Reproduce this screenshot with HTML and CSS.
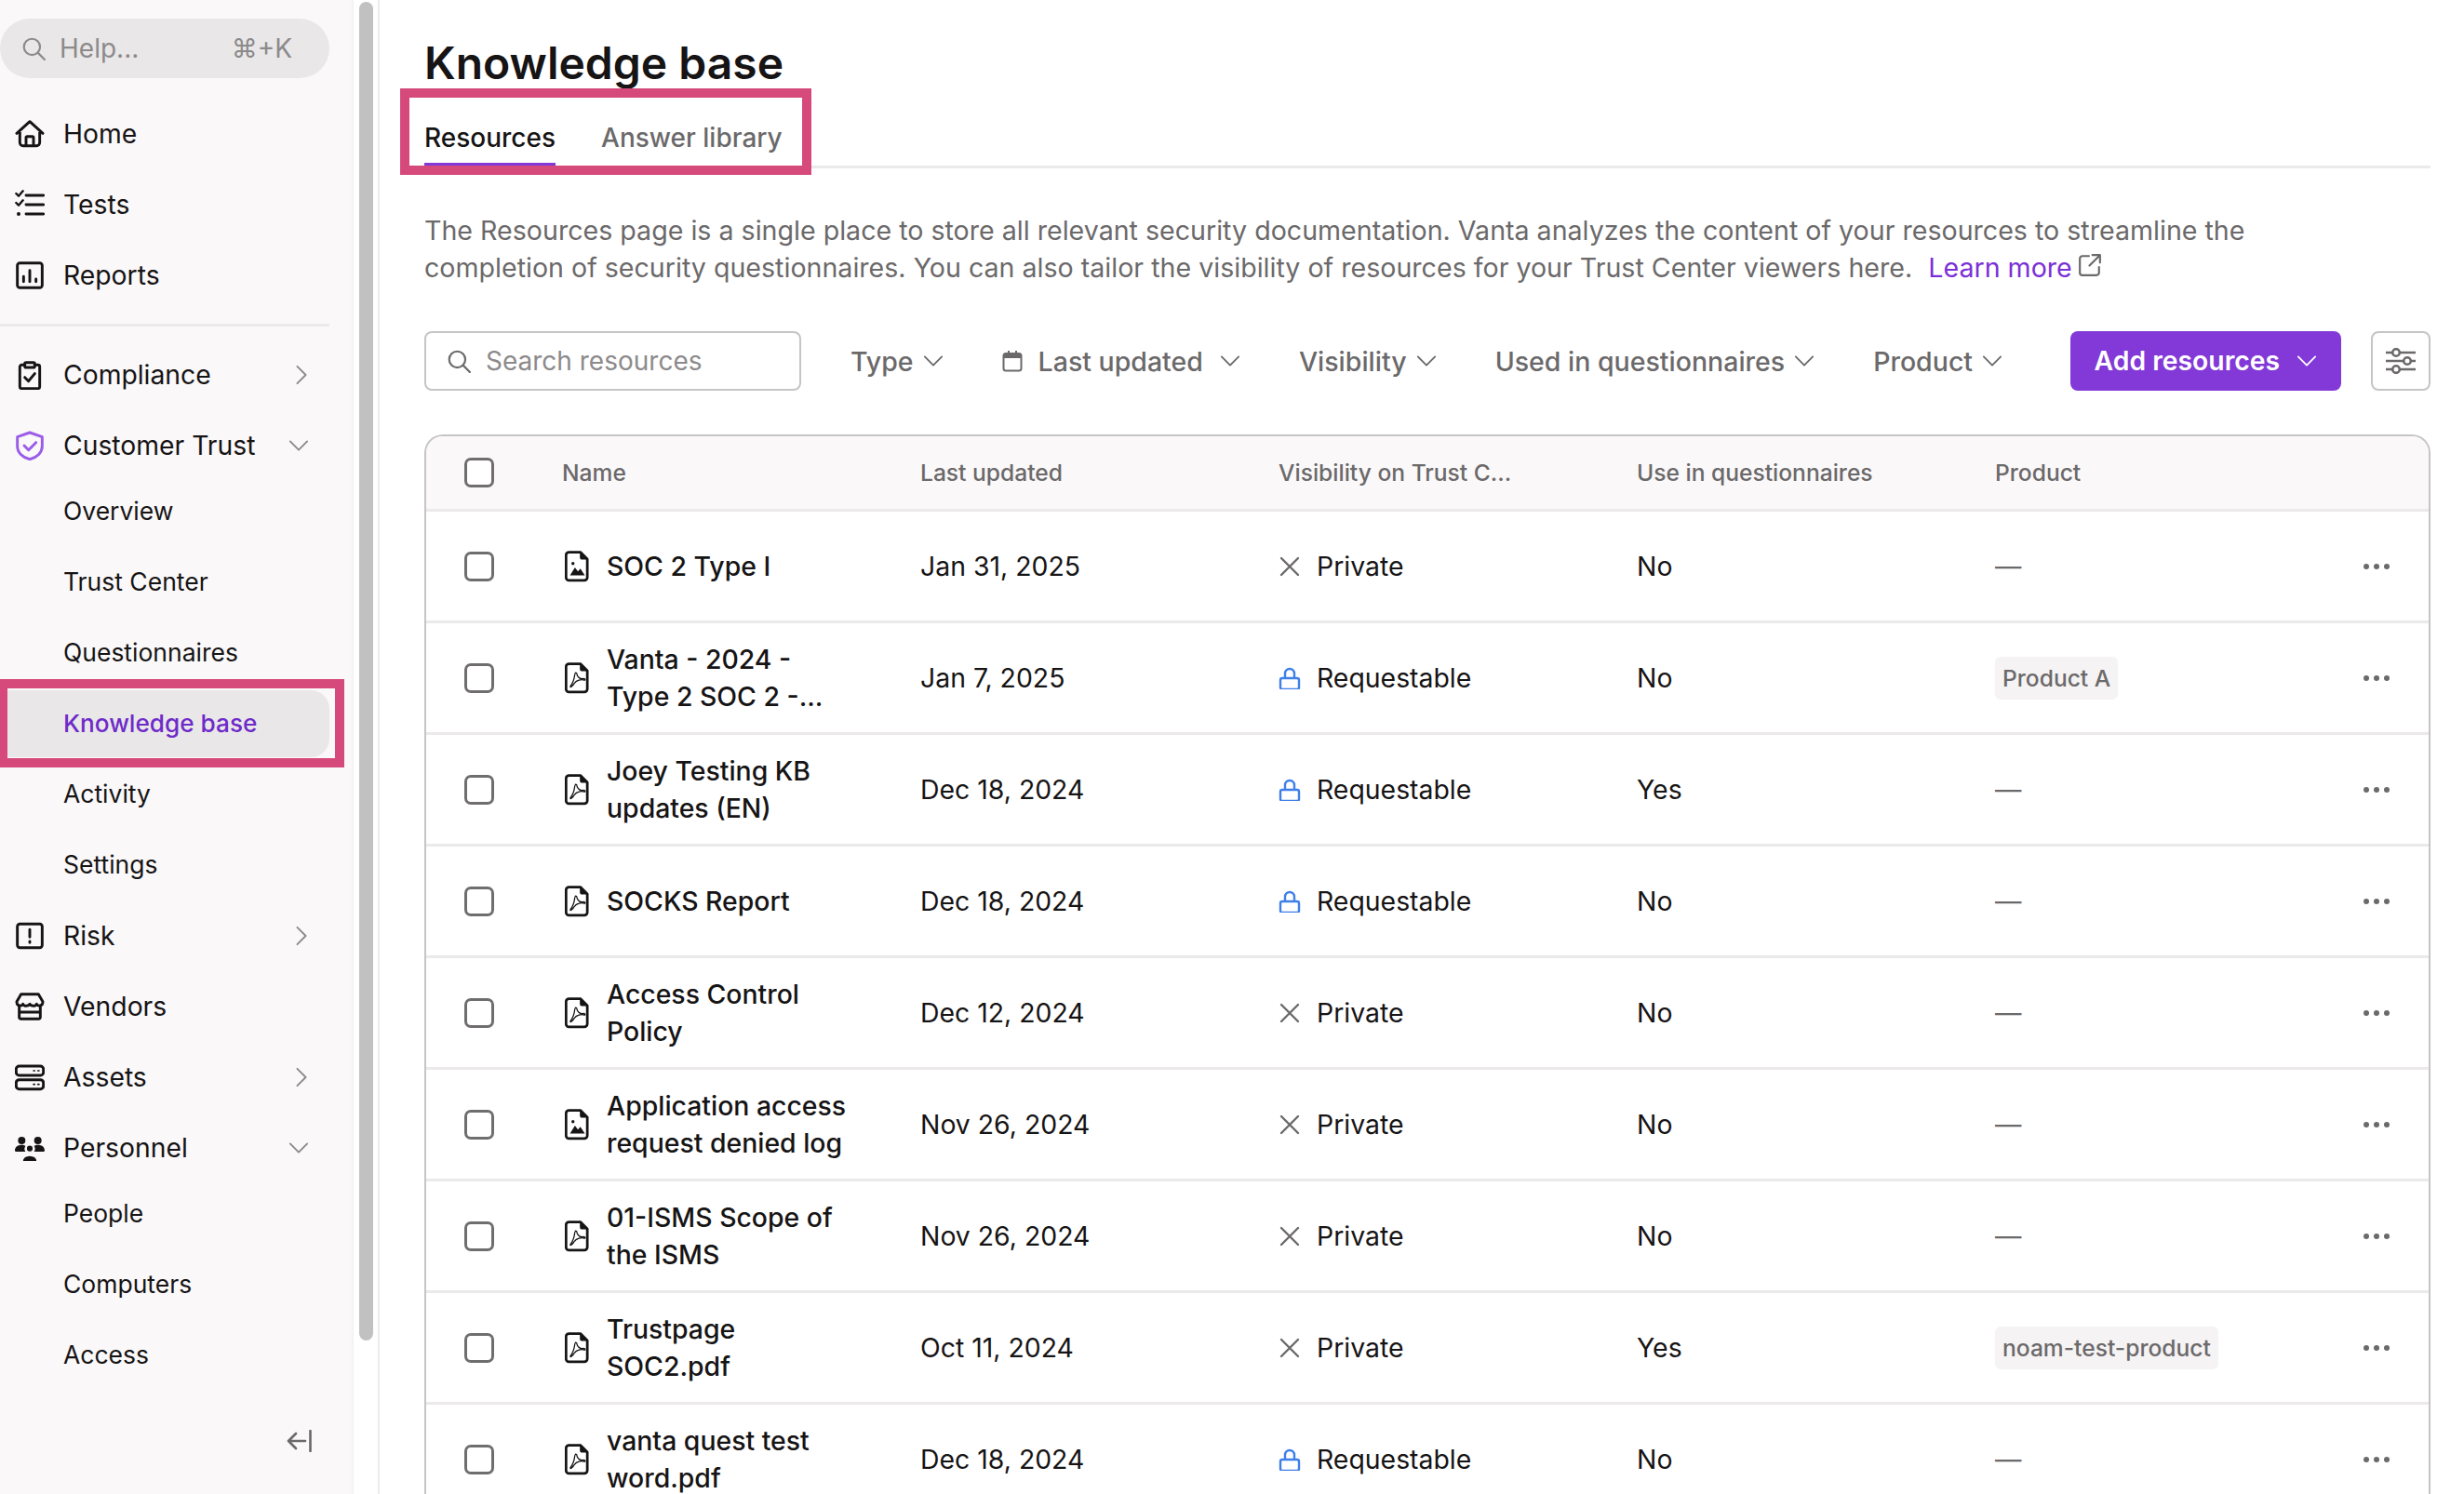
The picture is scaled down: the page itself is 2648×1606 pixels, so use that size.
FILE: index.html
```html
<!DOCTYPE html>
<html>
  <head>
    <meta charset="utf-8" />
    <title>Knowledge base</title>
    <link rel="stylesheet" href="styles.css">
  </head>
  <body>
    <svg class="defs" width="0" height="0">
      <symbol id="chev-down" viewBox="0 0 24 24"><path d="M2 7l10 10L22 7" /></symbol>
      <symbol id="chev-right" viewBox="0 0 24 24"><path d="M7 2l10 10L7 22" /></symbol>
      <symbol id="search" viewBox="0 0 24 24"><circle cx="10.500" cy="10.500" r="8" /><path d="M16.500 16.500L23 23" /></symbol>
      <symbol id="file-image" viewBox="0 0 24 32">
        <path d="M4 1.500h11.500l7 7V27a3 3 0 0 1-3 3H4a3 3 0 0 1-3-3V4.500a3 3 0 0 1 3-3z" />
        <path class="solid" d="M15 1.500l7.500 7.500h-5a2.500 2.500 0 0 1-2.500-2.500zM5 25l5-8 3 4 2.500-3 4.500 7z" />
        <circle class="solid" cx="8" cy="13" r="1.600" />
      </symbol>
      <symbol id="file-pdf" viewBox="0 0 24 32">
        <path d="M4 1.500h11.500l7 7V27a3 3 0 0 1-3 3H4a3 3 0 0 1-3-3V4.500a3 3 0 0 1 3-3z" />
        <path class="solid" d="M15 1.500l7.500 7.500h-5a2.500 2.500 0 0 1-2.500-2.500z" />
        <path class="thin" d="M10.500 11c-1.500 0 .5 6-5 13-1 2 2 1 4-3 2-3 7-4 10-3 1.500 0 1-2-2-1.500-3 .5-5.500-3-5.500-4.500 0-1 0-1.500-1.500-1.500z" />
      </symbol>
      <symbol id="private" viewBox="0 0 24 24"><path d="M3 3l18 18M21 3L3 21" /></symbol>
      <symbol id="lock" viewBox="0 0 24 24"><path d="M2 14a2 2 0 0 1 2-2h16a2 2 0 0 1 2 2v8a2 2 0 0 1-2 2H4a2 2 0 0 1-2-2zM7 12V7a5 5 0 0 1 10 0v5" /></symbol>
    </svg>

    <div class="app">
      <aside class="sidebar">
        <div class="help">
          <svg class="help-icon"><use href="#search" /></svg>
          <span class="help-text">Help...</span>
          <span class="help-keys">⌘+K</span>
        </div>

        <nav class="nav">
          <a class="nav-item">
            <svg class="nav-icon" viewBox="0 0 24 24"><path d="M1.500 11.500L12 2l10.500 9.500M4 9.500V19a2.500 2.500 0 0 0 2.500 2.500h11A2.500 2.500 0 0 0 20 19V9.500M9 21.500V15a1 1 0 0 1 1-1h4a1 1 0 0 1 1 1v6.500" /></svg>
            Home
          </a>
          <a class="nav-item">
            <svg class="nav-icon" viewBox="0 0 24 24"><path d="M9 4.500h14M9 12h14M9 19.500h14" /><path class="tick" d="M1 3l2 2 3.500-4M1 10.500l2 2 3.500-4" /><circle class="solid" cx="3" cy="19.500" r="1.500" /></svg>
            Tests
          </a>
          <a class="nav-item">
            <svg class="nav-icon" viewBox="0 0 24 24"><rect x="2" y="2" width="20" height="20" rx="2" /><path d="M7 13v4M12 8v9M17 15v2" /></svg>
            Reports
          </a>
        </nav>

        <div class="nav-divider"></div>

        <nav class="nav">
          <a class="nav-item">
            <svg class="nav-icon" viewBox="0 0 24 24"><path d="M8 4H5.500a1.500 1.500 0 0 0-1.500 1.500v16A1.500 1.500 0 0 0 5.500 23h13a1.500 1.500 0 0 0 1.500-1.500v-16A1.500 1.500 0 0 0 18.500 4H16" /><rect x="8" y="2" width="8" height="4" rx="1" /><path d="M8 14l3 3 5-6" /></svg>
            Compliance
            <svg class="nav-chev right"><use href="#chev-right" /></svg>
          </a>
          <a class="nav-item">
            <svg class="nav-icon purple" viewBox="0 0 24 24"><path d="M12 1.500l10 3.500v7.500c0 5-4 9-10 10.500C6 21.500 2 17.500 2 12.500V5z" /><path d="M7.500 12l3.500 3.500 6-6" /></svg>
            Customer Trust
            <svg class="nav-chev"><use href="#chev-down" /></svg>
          </a>
          <div class="subnav">
            <a class="nav-item sub">Overview</a>
            <a class="nav-item sub">Trust Center</a>
            <a class="nav-item sub">Questionnaires</a>
            <a class="nav-item sub active">Knowledge base</a>
            <a class="nav-item sub">Activity</a>
            <a class="nav-item sub">Settings</a>
          </div>
          <a class="nav-item">
            <svg class="nav-icon" viewBox="0 0 24 24"><rect x="2" y="2.500" width="20" height="19" rx="2" /><path d="M12 7v6M12 16.500v1" /></svg>
            Risk
            <svg class="nav-chev right"><use href="#chev-right" /></svg>
          </a>
          <a class="nav-item">
            <svg class="nav-icon" viewBox="0 0 24 24"><path d="M5 2h14l3.500 6c0 4-4 4-5 2-1 2-4 2-5.500 0-1.500 2-4.500 2-5.500 0-1 2-5 2-5-2zM3.500 11v9.500A1.500 1.500 0 0 0 5 22h14a1.500 1.500 0 0 0 1.500-1.500V11M3.500 16.500h17" /></svg>
            Vendors
          </a>
          <a class="nav-item">
            <svg class="nav-icon" viewBox="0 0 24 24"><rect x="1" y="3" width="22" height="7.500" rx="2.500" /><rect x="1" y="14" width="22" height="7.500" rx="2.500" /><path class="thin" d="M15 6.750h1M18.500 6.750h1M15 17.750h1M18.500 17.750h1" /></svg>
            Assets
            <svg class="nav-chev right"><use href="#chev-right" /></svg>
          </a>
          <a class="nav-item">
            <svg class="nav-icon" viewBox="0 0 24 24"><circle class="solid" cx="5.500" cy="6" r="3" /><circle class="solid" cx="18.500" cy="6" r="3" /><path class="solid" d="M0 14c0-3 2.500-4.500 5.500-4.500 1.500 0 2.500.5 3 1-1 1.500-1 3 0 4.500H1a1 1 0 0 1-1-1zM24 14c0-3-2.500-4.500-5.500-4.500-1.500 0-2.500.5-3 1 1 1.500 1 3 0 4.500H23a1 1 0 0 0 1-1z" /><circle class="mid" cx="12" cy="12.500" r="2.800" /><path class="mid" d="M6 23c0-3 2.500-5 6-5s6 2 6 5z" /></svg>
            Personnel
            <svg class="nav-chev"><use href="#chev-down" /></svg>
          </a>
          <div class="subnav">
            <a class="nav-item sub">People</a>
            <a class="nav-item sub">Computers</a>
            <a class="nav-item sub">Access</a>
          </div>
        </nav>

        <svg class="collapse" viewBox="0 0 28 24"><path d="M25.500 1v22M20 12H2M10 4l-8 8 8 8" /></svg>
      </aside>

      <div class="scrollbar"><div class="scrollbar-thumb"></div></div>

      <main class="main">
        <h1 class="title">Knowledge base</h1>

        <div class="tabs">
          <a class="tab active">Resources</a>
          <a class="tab">Answer library</a>
        </div>

        <p class="intro">
          The Resources page is a single place to store all relevant security documentation. Vanta analyzes the content of your resources to streamline the<br>
          completion of security questionnaires. You can also tailor the visibility of resources for your Trust Center viewers here.
          <a class="link">Learn more<svg class="link-icon" viewBox="0 0 24 24"><path d="M11 3H4.500A2.500 2.500 0 0 0 2 5.500v14A2.500 2.500 0 0 0 4.500 22h14a2.500 2.500 0 0 0 2.500-2.500V14M14.500 2H22v7.500M22 2L11.500 12.500" /></svg></a>
        </p>

        <div class="filters">
          <div class="search">
            <svg class="search-icon"><use href="#search" /></svg>
            <span>Search resources</span>
          </div>
          <div class="filter">Type<svg class="chev"><use href="#chev-down" /></svg></div>
          <div class="filter">
            <svg class="cal" viewBox="0 0 22 24"><rect x="1.500" y="4" width="19" height="18.500" rx="2.500" /><path class="solid" d="M2 4h18v5H2zM6 1h2v4H6zM14 1h2v4h-2z" /></svg>
            Last updated<svg class="chev wide"><use href="#chev-down" /></svg>
          </div>
          <div class="filter">Visibility<svg class="chev"><use href="#chev-down" /></svg></div>
          <div class="filter">Used in questionnaires<svg class="chev"><use href="#chev-down" /></svg></div>
          <div class="filter">Product<svg class="chev"><use href="#chev-down" /></svg></div>
          <button class="add-btn">Add resources<svg class="chev"><use href="#chev-down" /></svg></button>
          <button class="settings-btn">
            <svg viewBox="0 0 32 28"><path d="M0 5h7M15 5h17M0 14h19M27 14h5M0 23h7M15 23h17" /><circle cx="11" cy="5" r="3.800" /><circle cx="23" cy="14" r="3.800" /><circle cx="11" cy="23" r="3.800" /></svg>
          </button>
        </div>

        <div class="table">
          <div class="row head">
            <div class="cell-check"><span class="checkbox"></span></div>
            <div>Name</div>
            <div>Last updated</div>
            <div>Visibility on Trust C...</div>
            <div>Use in questionnaires</div>
            <div>Product</div>
          </div>

          <div class="row">
            <div class="cell-check"><span class="checkbox"></span></div>
            <div class="cell-name"><svg class="file-icon"><use href="#file-image" /></svg><span>SOC 2 Type I</span></div>
            <div>Jan 31, 2025</div>
            <div class="cell-vis"><svg class="vis-icon"><use href="#private" /></svg>Private</div>
            <div>No</div>
            <div class="dash">—</div>
            <div class="dots"><i></i><i></i><i></i></div>
          </div>

          <div class="row">
            <div class="cell-check"><span class="checkbox"></span></div>
            <div class="cell-name"><svg class="file-icon"><use href="#file-pdf" /></svg><span>Vanta - 2024 -<br>Type 2 SOC 2 -...</span></div>
            <div>Jan 7, 2025</div>
            <div class="cell-vis"><svg class="vis-icon lock"><use href="#lock" /></svg>Requestable</div>
            <div>No</div>
            <div><span class="tag">Product A</span></div>
            <div class="dots"><i></i><i></i><i></i></div>
          </div>

          <div class="row">
            <div class="cell-check"><span class="checkbox"></span></div>
            <div class="cell-name"><svg class="file-icon"><use href="#file-pdf" /></svg><span>Joey Testing KB<br>updates (EN)</span></div>
            <div>Dec 18, 2024</div>
            <div class="cell-vis"><svg class="vis-icon lock"><use href="#lock" /></svg>Requestable</div>
            <div>Yes</div>
            <div class="dash">—</div>
            <div class="dots"><i></i><i></i><i></i></div>
          </div>

          <div class="row">
            <div class="cell-check"><span class="checkbox"></span></div>
            <div class="cell-name"><svg class="file-icon"><use href="#file-pdf" /></svg><span>SOCKS Report</span></div>
            <div>Dec 18, 2024</div>
            <div class="cell-vis"><svg class="vis-icon lock"><use href="#lock" /></svg>Requestable</div>
            <div>No</div>
            <div class="dash">—</div>
            <div class="dots"><i></i><i></i><i></i></div>
          </div>

          <div class="row">
            <div class="cell-check"><span class="checkbox"></span></div>
            <div class="cell-name"><svg class="file-icon"><use href="#file-pdf" /></svg><span>Access Control<br>Policy</span></div>
            <div>Dec 12, 2024</div>
            <div class="cell-vis"><svg class="vis-icon"><use href="#private" /></svg>Private</div>
            <div>No</div>
            <div class="dash">—</div>
            <div class="dots"><i></i><i></i><i></i></div>
          </div>

          <div class="row">
            <div class="cell-check"><span class="checkbox"></span></div>
            <div class="cell-name"><svg class="file-icon"><use href="#file-image" /></svg><span>Application access<br>request denied log</span></div>
            <div>Nov 26, 2024</div>
            <div class="cell-vis"><svg class="vis-icon"><use href="#private" /></svg>Private</div>
            <div>No</div>
            <div class="dash">—</div>
            <div class="dots"><i></i><i></i><i></i></div>
          </div>

          <div class="row">
            <div class="cell-check"><span class="checkbox"></span></div>
            <div class="cell-name"><svg class="file-icon"><use href="#file-pdf" /></svg><span>01-ISMS Scope of<br>the ISMS</span></div>
            <div>Nov 26, 2024</div>
            <div class="cell-vis"><svg class="vis-icon"><use href="#private" /></svg>Private</div>
            <div>No</div>
            <div class="dash">—</div>
            <div class="dots"><i></i><i></i><i></i></div>
          </div>

          <div class="row">
            <div class="cell-check"><span class="checkbox"></span></div>
            <div class="cell-name"><svg class="file-icon"><use href="#file-pdf" /></svg><span>Trustpage<br>SOC2.pdf</span></div>
            <div>Oct 11, 2024</div>
            <div class="cell-vis"><svg class="vis-icon"><use href="#private" /></svg>Private</div>
            <div>Yes</div>
            <div><span class="tag">noam-test-product</span></div>
            <div class="dots"><i></i><i></i><i></i></div>
          </div>

          <div class="row">
            <div class="cell-check"><span class="checkbox"></span></div>
            <div class="cell-name"><svg class="file-icon"><use href="#file-pdf" /></svg><span>vanta quest test<br>word.pdf</span></div>
            <div>Dec 18, 2024</div>
            <div class="cell-vis"><svg class="vis-icon lock"><use href="#lock" /></svg>Requestable</div>
            <div>No</div>
            <div class="dash">—</div>
            <div class="dots"><i></i><i></i><i></i></div>
          </div>
        </div>
      </main>

      <!-- the pink annotation boxes drawn over the screenshot -->
      <div class="callout callout-tabs"></div>
      <div class="callout callout-nav"></div>
    </div>
  </body>
</html>
```

FILE: styles.css
```css
* {
  box-sizing: border-box;
}
html,
body {
  margin: 0;
  height: 100%;
  overflow: hidden;
  background-color: #fff;
}
body {
  font-family: Inter, "Noto Sans", sans-serif;
  color: #161415;
  font-size: 28.4px;
}
svg {
  fill: none;
  stroke: currentColor;
  stroke-linecap: round;
  stroke-linejoin: round;
  flex-shrink: 0;
}
.defs {
  position: absolute;
}
.solid {
  fill: currentColor;
  stroke: none;
}
.thin {
  stroke-width: 1.2;
}
.app {
  position: relative;
  display: flex;
  height: 1606px;
  overflow: hidden;
}

/* sidebar */
.sidebar {
  display: flex;
  flex-direction: column;
  width: 380px;
  height: 100%;
  padding-top: 20px;
  background-color: #faf8f9;
  box-shadow: inset -3px 0 3px -2px #efedee;
}
.help {
  display: flex;
  align-items: center;
  width: 354px;
  height: 64px;
  padding-left: 23px;
  margin-bottom: 24px;
  border-radius: 32px;
  background-color: #e9e7e8;
  color: #8c8a8b;
}
.help-icon {
  width: 26px;
  height: 26px;
  stroke-width: 2;
}
.help-text {
  margin-left: 15px;
  font-size: 28px;
}
.help-keys {
  margin-left: auto;
  margin-right: 40px;
  font-size: 28px;
}
.nav {
  display: flex;
  flex-direction: column;
  gap: 4px;
  width: 354px;
}
.nav-item {
  display: flex;
  align-items: center;
  height: 72px;
  padding-left: 16px;
  font-size: 28.3px;
}
.nav-icon {
  width: 32px;
  height: 32px;
  margin-right: 20px;
  stroke-width: 2.2;
}
.nav-icon.purple {
  color: #9b5ce8;
}
.nav-icon .tick {
  stroke-width: 1.8;
}
.nav-icon .mid {
  fill: #161415;
  stroke: #faf8f9;
  stroke-width: 1;
}
.nav-chev {
  width: 22px;
  height: 22px;
  margin-left: auto;
  margin-right: 22px;
  color: #8a8889;
  stroke-width: 2;
}
.nav-chev.right {
  margin-right: 19px;
}
.subnav {
  display: flex;
  flex-direction: column;
  gap: 4px;
  margin-top: -5px;
}
.nav-item.sub {
  padding-left: 68px;
  padding-bottom: 2px;
  font-size: 26.5px;
  border-radius: 0 20px 20px 0;
}
.nav-item.active {
  color: #6f2bc9;
  background-color: #e9e7e8;
  font-size: 26.2px;
  font-weight: 500;
}
.nav-divider {
  width: 354px;
  height: 3px;
  margin: 16px 0 16px;
  background-color: #ebe9ea;
}
.collapse {
  width: 28px;
  height: 24px;
  margin-top: auto;
  margin-left: 308px;
  margin-bottom: 45px;
  color: #6b696a;
  stroke-width: 2.6;
}
.scrollbar {
  width: 28px;
  height: 100%;
  padding: 2px 5px 0 6px;
  border-right: 2px solid #eeeced;
}
.scrollbar-thumb {
  height: 1439px;
  border-radius: 8px;
  background-color: #c1c1c1;
}

/* main */
.main {
  flex: 1;
  min-width: 0;
  padding: 0 36px 0 48px;
}
.title {
  margin: 0;
  padding-top: 39px;
  font-size: 48px;
  line-height: 58px;
  font-weight: 600;
}
.tabs {
  display: flex;
  gap: 49px;
  height: 84px;
  align-items: flex-end;
  border-bottom: 3px solid #ebe9ea;
}
.tab {
  display: flex;
  align-items: flex-end;
  height: 57px;
  padding-bottom: 10px;
  border-bottom: 3px solid transparent;
  font-size: 28px;
  font-weight: 500;
  line-height: 34px;
  color: #6b696a;
}
.tab.active {
  color: #161415;
  border-bottom-color: #8239d8;
}
.intro {
  margin: 47px 0 0;
  font-size: 28.6px;
  line-height: 40px;
  color: #6b696a;
}
.link {
  margin-left: 9px;
  color: #7b2fd6;
}
.link-icon {
  width: 26px;
  height: 26px;
  margin-left: 6px;
  color: #6b696a;
  stroke-width: 2;
}
.filters {
  display: flex;
  align-items: center;
  gap: 63px;
  height: 64px;
  margin-top: 48px;
  white-space: nowrap;
}
.search {
  display: flex;
  align-items: center;
  flex-shrink: 0;
  width: 405px;
  height: 64px;
  margin-right: -10px;
  padding-left: 22px;
  border: 2px solid #c6c4c5;
  border-radius: 8px;
  color: #8c8a8b;
  font-size: 28px;
}
.search-icon {
  width: 26px;
  height: 26px;
  margin-right: 16px;
  color: #6b696a;
  stroke-width: 2;
}
.filter {
  display: flex;
  align-items: center;
  font-size: 28.5px;
  font-weight: 500;
  color: #6b696a;
}
.cal {
  width: 22px;
  height: 24px;
  margin-right: 17px;
  stroke-width: 2;
}
.chev {
  width: 22px;
  height: 22px;
  margin-left: 10px;
  stroke-width: 2;
}
.chev.wide {
  margin-left: 18px;
}
.add-btn {
  display: flex;
  align-items: center;
  height: 64px;
  margin-left: auto;
  padding: 0 26px;
  border: 0;
  border-radius: 8px;
  background-color: #8239d8;
  color: #fff;
  font-family: inherit;
  font-size: 28.3px;
  font-weight: 600;
}
.add-btn .chev {
  margin-left: 18px;
}
.settings-btn {
  display: flex;
  align-items: center;
  justify-content: center;
  width: 64px;
  height: 64px;
  margin-left: -31px;
  padding: 0;
  border: 2px solid #c6c4c5;
  border-radius: 8px;
  background-color: #fff;
  color: #6b696a;
}
.settings-btn svg {
  width: 32px;
  height: 28px;
  stroke-width: 2.6;
}

/* table */
.table {
  margin-top: 47px;
  border: 2px solid #c6c4c5;
  border-bottom: 0;
  border-radius: 20px 20px 0 0;
  overflow: hidden;
}
.row {
  display: grid;
  grid-template-columns: 146px 385px 385px 385px 385px 1fr 70px;
  align-items: center;
  height: 120px;
  border-bottom: 3px solid #ebe9ea;
}
.row.head {
  height: 81px;
  background-color: #faf8f9;
  font-size: 24.6px;
  font-weight: 500;
  color: #6b696a;
}
.cell-check {
  display: flex;
  padding-left: 41px;
}
.checkbox {
  width: 32px;
  height: 32px;
  border: 3px solid #6f6d6e;
  border-radius: 7px;
  background-color: #fff;
}
.cell-name {
  display: flex;
  align-items: center;
  gap: 19px;
  font-weight: 500;
  line-height: 40px;
}
.file-icon {
  width: 26px;
  height: 34px;
  margin-left: 3px;
  stroke-width: 2.6;
}
.cell-vis {
  display: flex;
  align-items: center;
  gap: 17px;
}
.vis-icon {
  width: 24px;
  height: 24px;
  color: #6b696a;
  stroke-width: 2.4;
}
.vis-icon.lock {
  color: #3f7fe8;
}
.dash {
  color: #6b696a;
}
.tag {
  display: inline-block;
  padding: 0 8px;
  line-height: 46px;
  border-radius: 6px;
  background-color: #f5f3f4;
  font-size: 24.6px;
  font-weight: 500;
  color: #6b696a;
}
.dots {
  display: flex;
  gap: 5px;
}
.dots i {
  width: 6px;
  height: 6px;
  border-radius: 50%;
  background-color: #6b696a;
}

/* annotations */
.callout {
  position: absolute;
  border: 10px solid #d64a7b;
}
.callout-tabs {
  left: 430px;
  top: 95px;
  width: 442px;
  height: 93px;
}
.callout-nav {
  left: -2px;
  top: 730px;
  width: 372px;
  height: 95px;
}
```
